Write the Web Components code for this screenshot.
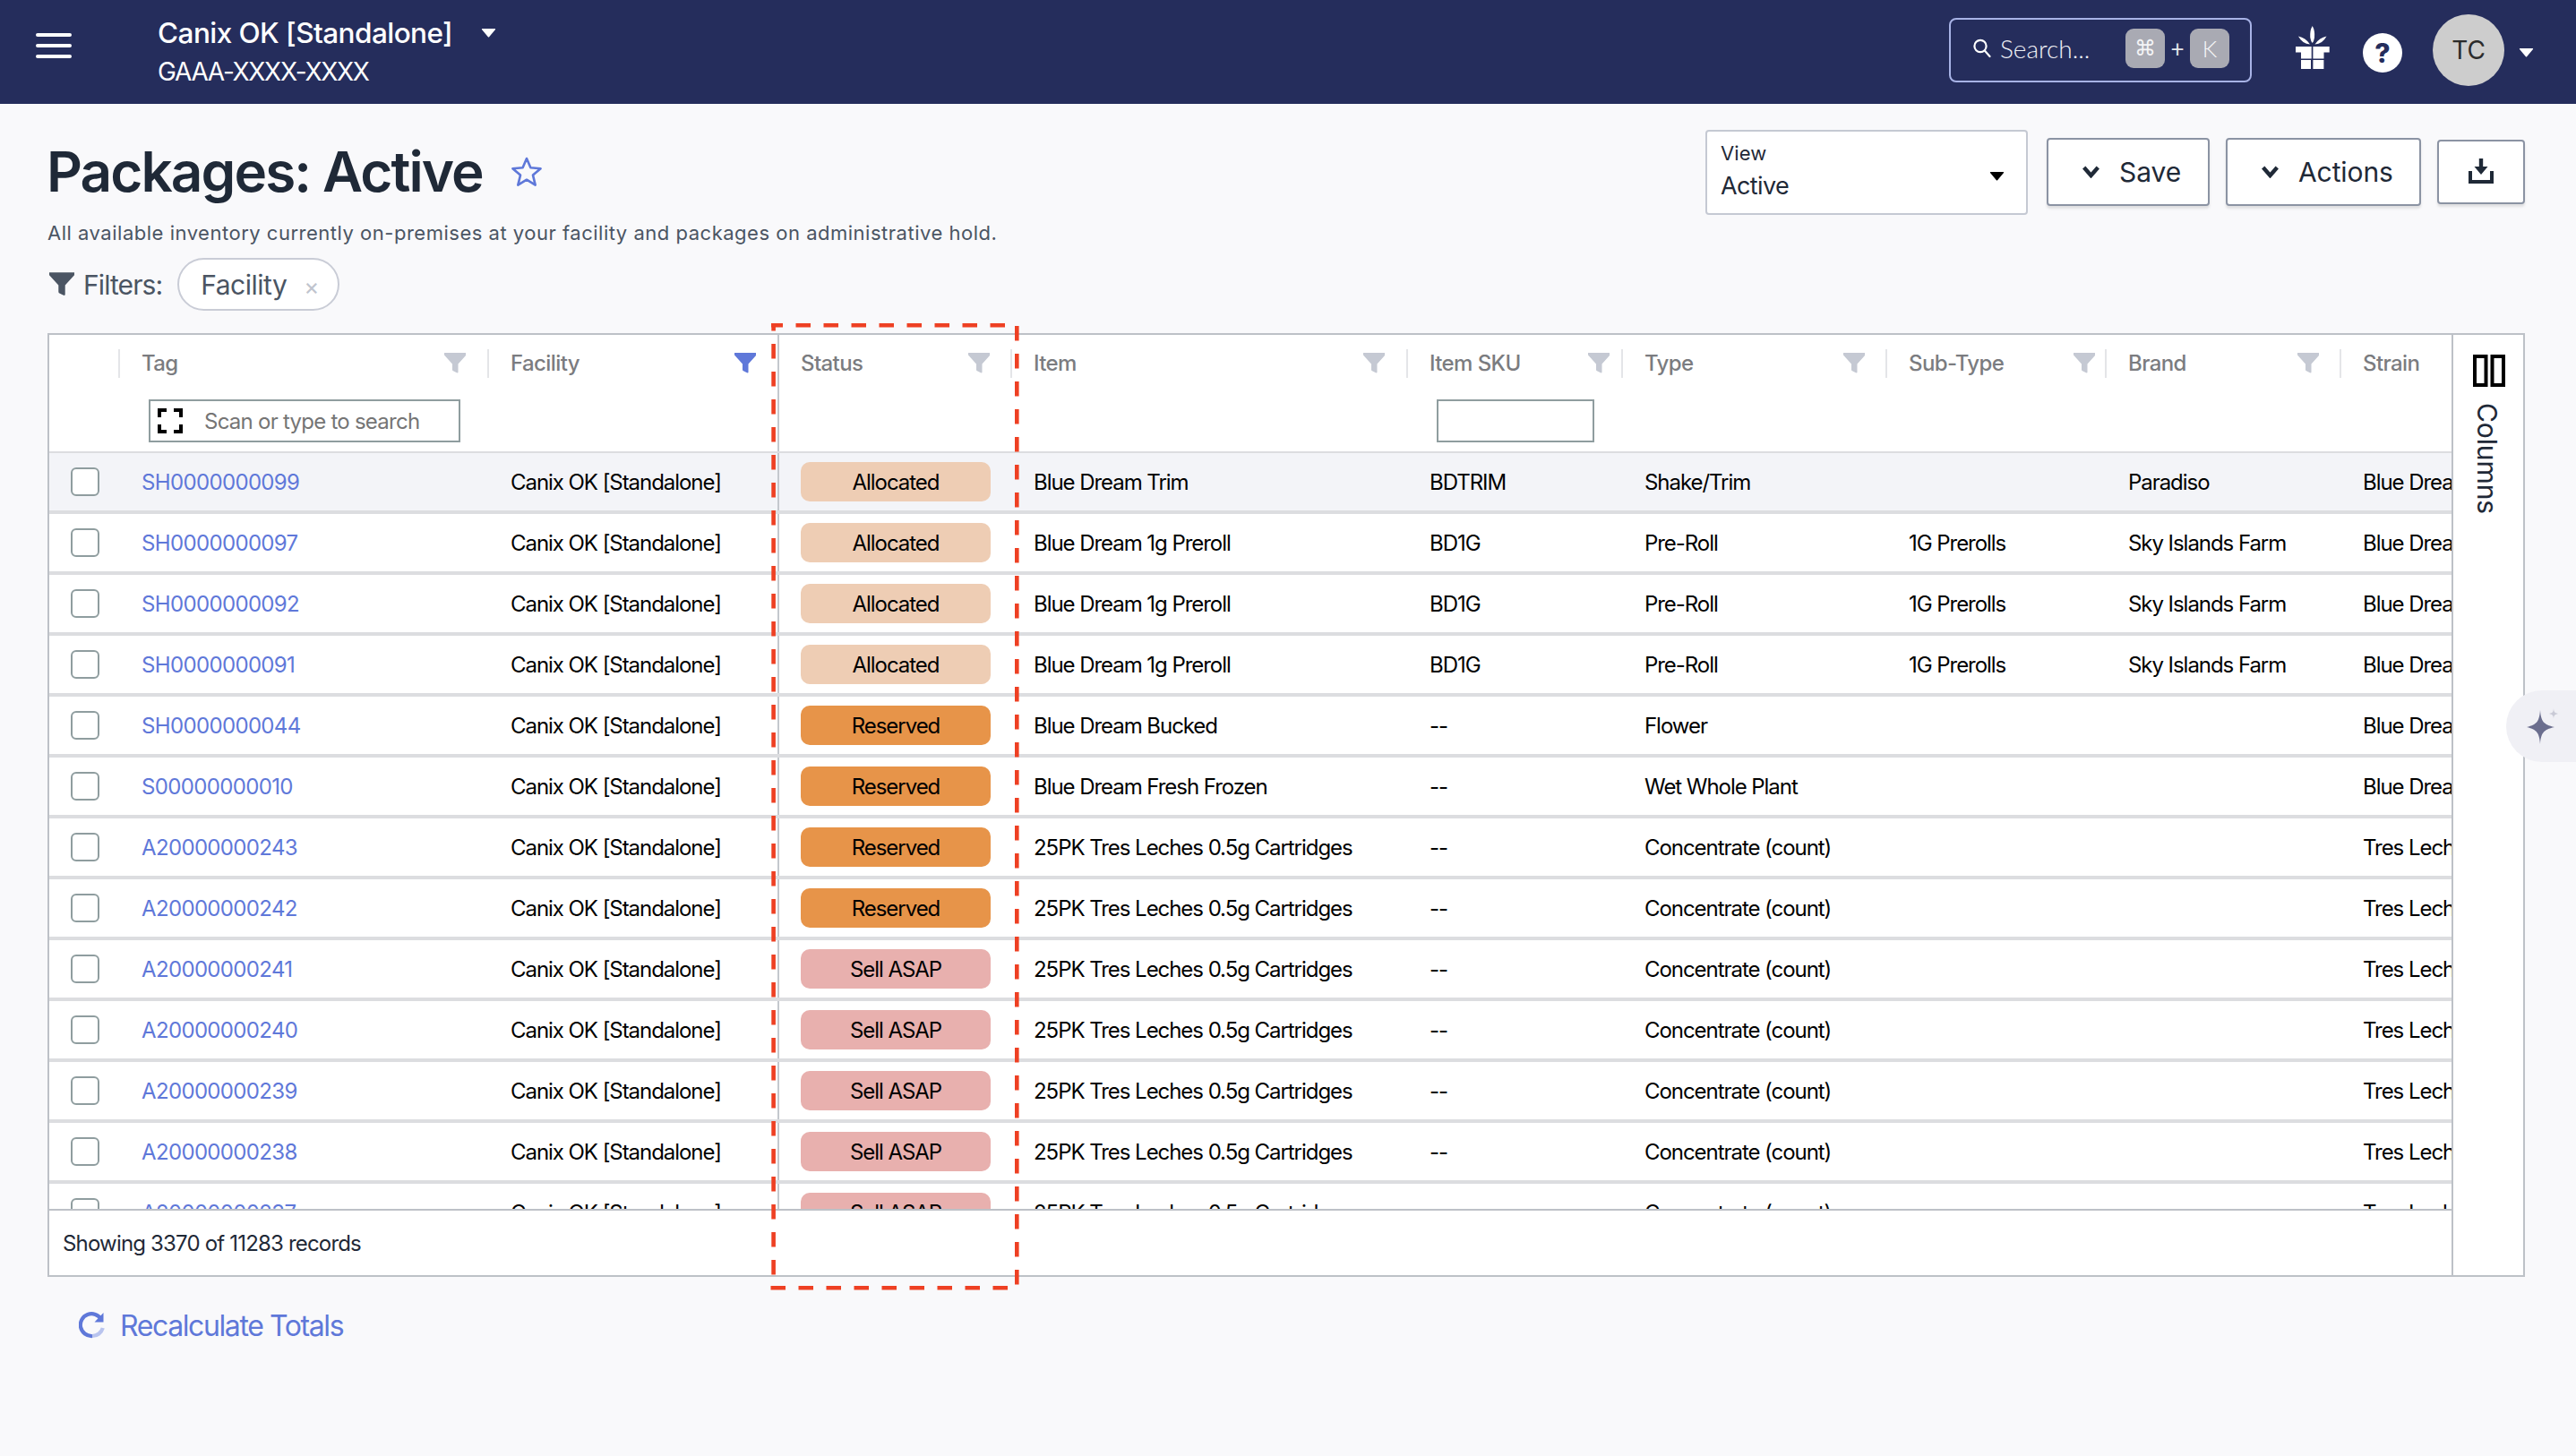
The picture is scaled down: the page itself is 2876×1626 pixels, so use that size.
<!DOCTYPE html>
<html lang="en">
<head>
<meta charset="utf-8">
<title>Packages: Active</title>
<style>
  html, body { margin: 0; padding: 0; background: #f9f9fb; }
  body { font-family: Inter, "Liberation Sans", sans-serif; width: 2876px; height: 1626px; overflow: hidden; position: relative; color: #1f2937; }
</style>
</head>
<body>
<app-header></app-header>
<page-main>
  <page-head title-text="Packages: Active" description="All available inventory currently on-premises at your facility and packages on administrative hold."></page-head>
  <filter-bar></filter-bar>
  <data-table></data-table>
  <recalc-link></recalc-link>
</page-main>
<focus-box></focus-box>
<assist-tab></assist-tab>

<script>
const BLUE = '#5f78d9';
const FUNNEL = 'M0 0H24.5V2.5L15.5 12.5V21.5Q15.5 23 13.5 22L9.5 20Q9 19.5 9 18.5V12.5L0 2.5Z';

function def(name, css, html, init) {
  customElements.define(name, class extends HTMLElement {
    connectedCallback() {
      if (this.shadowRoot) return;
      const root = this.attachShadow({ mode: 'open' });
      const a = n => this.getAttribute(n) || '';
      root.innerHTML = '<style>' + css + '</style>' + (typeof html === 'function' ? html(a, this) : html);
      if (init) init(root, a, this);
    }
  });
}

def('app-caret', `
  :host { display: inline-flex; }
  svg { display: block; }
`, a => `<svg width="${a('w') || 17}" height="${a('h') || 11}" viewBox="0 0 17 11"><path d="M1.5 1H15.5Q16.5 1 16 2L9.3 10Q8.5 11 7.7 10L1 2Q.5 1 1.5 1Z" fill="${a('color') || '#fff'}"/></svg>`);

def('app-header', `
  :host { display: flex; align-items: flex-start; height: 116px; background: #252d5c; color: #fff; box-sizing: border-box; padding: 0 47px 0 40px; }
  .burger { display: flex; flex-direction: column; gap: 8px; width: 40px; margin: 37px 96px 0 0; }
  .burger i { display: block; height: 4px; background: #fff; border-radius: 2px; }
  .who { padding-top: 14px; }
  .name { display: flex; align-items: center; height: 44px; font-size: 31.5px; font-weight: 500; letter-spacing: -.55px; white-space: nowrap; }
  .name app-caret { margin-left: 32px; }
  .acct { height: 36px; line-height: 36px; margin-top: 4px; font-size: 28px; letter-spacing: -1.3px; white-space: nowrap; }
  .right { margin-left: auto; display: flex; align-items: flex-start; }
  .search { margin-top: 20px; width: 338px; height: 72px; box-sizing: border-box; border: 2px solid #a8b3e6; border-radius: 8px; display: flex; align-items: center; padding: 0 23px 4px 25px; }
  .search svg { display: block; margin-right: 10px; }
  .search .ph { font-family: Lato, Inter, sans-serif; font-size: 28px; color: #f0f1f6; white-space: nowrap; font-weight: 300; }
  .keys { margin-left: auto; display: flex; align-items: center; }
  kbd { width: 44px; height: 44px; border-radius: 9px; background: #a9aab3; color: #f4f4f6; display: flex; align-items: center; justify-content: center; font: 24px "DejaVu Sans", Inter, sans-serif; }
  kbd.k { font: 300 26px Lato, Inter, sans-serif; }
  .plus { width: 28px; text-align: center; color: #e4e5ea; font: 400 26px Lato, Inter, sans-serif; }
  .gift { margin: 29px 37px 0 49px; display: block; }
  .help { margin-top: 37px; width: 44px; height: 44px; border-radius: 50%; background: #fff; color: #252d5c; font-size: 30px; font-weight: 800; display: flex; align-items: center; justify-content: center; }
  .avatar { margin: 16px 16px 0 34px; width: 80px; height: 80px; border-radius: 50%; background: #cdcdcd; color: #2b2b2b; font-size: 28px; display: flex; align-items: center; justify-content: center; }
  .tail { margin-top: 53px; }
`, `
  <div class="burger"><i></i><i></i><i></i></div>
  <div class="who">
    <div class="name">Canix OK [Standalone]<app-caret></app-caret></div>
    <div class="acct">GAAA-XXXX-XXXX</div>
  </div>
  <div class="right">
    <div class="search">
      <svg width="20" height="24" viewBox="0 0 20 24" fill="none" stroke="#fff" stroke-width="2.2" stroke-linecap="round"><circle cx="8" cy="9.5" r="6.6"/><path d="M12.8 14.6L18.5 21"/></svg>
      <span class="ph">Search...</span>
      <div class="keys"><kbd>⌘</kbd><span class="plus">+</span><kbd class="k">K</kbd></div>
    </div>
    <svg class="gift" width="38" height="48" viewBox="0 0 38 48" fill="#fff">
      <path d="M18.7 0Q21.7 5 21 13Q20.3 17.5 18.7 19Q17 17.5 16.3 13Q15.7 5 18.7 0Z"/>
      <path d="M3 11.5Q11 13 16 20.5Q7.5 20 3 11.5Z"/>
      <path d="M34.5 11.5Q26.5 13 21.5 20.5Q30 20 34.5 11.5Z"/>
      <path d="M0 23H17.7V36.5H6V29.5H0Z"/>
      <path d="M37.7 23H19.4V36.5H31.5V29.5H37.7Z"/>
      <rect x="6" y="38" width="11" height="10"/><rect x="19.4" y="38" width="12" height="10"/>
    </svg>
    <div class="help">?</div>
    <div class="avatar">TC</div>
    <app-caret class="tail"></app-caret>
  </div>
`);

def('page-main', `
  :host { display: block; padding: 28px 57px 0 53px; }
`, `<slot></slot>`);

def('page-head', `
  :host { display: block; }
  .top { display: flex; align-items: center; height: 96px; }
  h1 { margin: 0 0 0 -1px; font-size: 62px; font-weight: 600; letter-spacing: -1.9px; color: #1f2937; white-space: nowrap; line-height: 96px; }
  .star { margin-left: 31px; display: block; }
  .actions { margin-left: auto; display: flex; align-items: center; gap: 18px; }
  p { margin: 0; height: 40px; line-height: 40px; font-size: 22px; letter-spacing: .51px; color: #4b5563; white-space: nowrap; }
  app-select { margin-right: 3px; }
`, a => `
  <div class="top">
    <h1>${a('title-text')}</h1>
    <svg class="star" width="36" height="34" viewBox="0 0 36 34" fill="none" stroke="${BLUE}" stroke-width="2.6" stroke-linejoin="round"><path d="M18 2L22.4 12.3L33.6 13.2L25 20.6L27.7 31.6L18 25.7L8.3 31.6L11 20.6L2.4 13.2L13.6 12.3Z"/></svg>
    <div class="actions">
      <app-select label="View" value="Active"></app-select>
      <app-button label="Save" chevron style="--w:182px"></app-button>
      <app-button label="Actions" chevron style="--w:218px"></app-button>
      <app-button download style="--w:98px;--h:72px"></app-button>
    </div>
  </div>
  <p>${a('description')}</p>
`);

def('app-select', `
  :host { display: block; width: 360px; height: 95px; box-sizing: border-box; background: #fff; border: 2px solid #c5c9d3; border-radius: 4px; position: relative; padding: 8px 15px; color: #1f2937; }
  .l { font-size: 22px; line-height: 32px; letter-spacing: .1px; }
  .v { font-size: 27px; line-height: 40px; margin-top: 1px; letter-spacing: -.6px; }
  .c { position: absolute; right: 24px; top: 44px; }
`, a => `<div class="l">${a('label')}</div><div class="v">${a('value')}</div><app-caret class="c" color="#000"></app-caret>`);

def('app-button', `
  :host { display: block; width: var(--w); height: var(--h, 76px); box-sizing: border-box; background: #fff; border: 2px solid #8b93a3; border-radius: 4px; box-shadow: 0 3px 3px rgba(0,0,0,.1); color: #1f2937; }
  .in { display: flex; align-items: center; height: 100%; font-size: 30px; letter-spacing: -.1px; padding-left: 38px; white-space: nowrap; box-sizing: border-box; }
  .in svg.ch { margin-right: 22px; display: block; }
  .dl { justify-content: center; padding: 0 0 2px; }
`, (a, el) => el.hasAttribute('download')
  ? `<div class="in dl"><svg width="28" height="28" viewBox="0 0 28 28" fill="#1f2937"><path d="M11.8 0H16.2V9H21.5L14 18L6.500 9H11.800Z"/><path d="M0 14H4V24H24V14H28V28H0Z"/></svg></div>`
  : `<div class="in"><svg class="ch" width="19" height="14" viewBox="0 0 19 14" fill="none" stroke="#1f2937" stroke-width="4.400"><path d="M1.700 2L9.500 11L17.300 2"/></svg>${a('label')}</div>`);

def('filter-bar', `
  :host { display: flex; align-items: center; height: 59px; margin-top: 8px; color: #4b5563; }
  svg { display: block; margin: 0 10px 0 2px; }
  .lbl { font-size: 30px; letter-spacing: -.9px; margin-right: 17px; white-space: nowrap; }
`, `
  <svg width="28" height="28" viewBox="0 0 24.500 24"><path d="${FUNNEL}" fill="#4b5563"/></svg>
  <span class="lbl">Filters:</span>
  <filter-chip label="Facility"></filter-chip>
`);

def('filter-chip', `
  :host { display: flex; align-items: center; width: 181px; height: 59px; box-sizing: border-box; background: #fff; border: 2.500px solid #c9ccd6; border-radius: 30px; padding-left: 24px; color: #4b5563; font-size: 30px; letter-spacing: -.5px; white-space: nowrap; }
  .x { margin-left: 19px; color: #c0c4ce; font-size: 26px; line-height: 1; padding-top: 4px; }
`, a => `${a('label')}<span class="x">×</span>`);

def('col-head', `
  :host { display: block; position: relative; height: 130px; min-width: 0; box-sizing: border-box; }
  .t { display: flex; align-items: center; height: 63px; padding: 0 var(--fr, 26px) 0 24px; box-sizing: border-box; font-size: 24px; font-weight: 500; letter-spacing: -.6px; color: #7b7c80; white-space: nowrap; overflow: hidden; }
  .f { margin-left: auto; display: block; flex: none; }
  .sep { position: absolute; right: 0; top: 16px; width: 2px; height: 32px; background: #e4e5e8; }
  ::slotted(*) { margin: 9px 0 0 32px; }
`, (a, el) => `
  <div class="t">${a('label')}${a('label') && !el.hasAttribute('nofilter') ? `<svg class="f" width="24.500" height="23" viewBox="0 0 24.500 23"><path d="${FUNNEL}" fill="${el.hasAttribute('active') ? BLUE : '#c5c9d3'}"/></svg>` : ''}</div>
  ${el.hasAttribute('nosep') ? '' : '<div class="sep"></div>'}
  <slot></slot>
`);

def('head-input', `
  :host { display: flex; align-items: center; width: var(--w); height: 48px; box-sizing: border-box; border: 2px solid #8f9d9f; background: #fff; color: #757575; font-size: 24px; letter-spacing: -.75px; white-space: nowrap; }
  svg { display: block; margin: 0 24px 0 8px; }
`, a => a('placeholder') ? `<svg width="28" height="28" viewBox="0 0 28 28" fill="none" stroke="#000" stroke-width="4"><path d="M10 2H2V10M18 2H26V10M2 18V26H10M26 18V26H18"/></svg>${a('placeholder')}` : '');

def('status-badge', `
  :host { display: flex; align-items: center; justify-content: center; width: 212px; height: 44px; border-radius: 10px; font-size: 24px; letter-spacing: -1.05px; color: #000; white-space: nowrap; }
  :host([kind="Allocated"]) { background: #eecdb4; }
  :host([kind="Reserved"]) { background: #e79449; }
  :host([kind="Sell ASAP"]) { background: #e8b0ae; }
`, a => a('kind'));

def('table-row', `
  :host { display: grid; grid-template-columns: var(--cols); height: 68px; box-sizing: border-box; border-bottom: 4px solid #dcdde0; background: #fff; font-size: 24px; letter-spacing: -1.05px; color: #000; }
  :host([hl]) { background: #f3f4f8; }
  .c { display: flex; align-items: center; padding-left: 24px; white-space: nowrap; overflow: hidden; min-width: 0; }
  .status { box-shadow: -2px 0 0 #c4c8ce; overflow: visible; }
  .box i { display: block; width: 32px; height: 32px; box-sizing: border-box; border: 2px solid #8f9d9f; border-radius: 6px; background: #fff; }
  a { color: ${BLUE}; text-decoration: none; letter-spacing: -.65px; }
`, a => `
  <div class="c box"><i></i></div>
  <div class="c"><a href="#">${a('tag')}</a></div>
  <div class="c">${a('facility')}</div>
  <div class="c status"><status-badge kind="${a('status')}"></status-badge></div>
  <div class="c">${a('item')}</div>
  <div class="c">${a('sku')}</div>
  <div class="c">${a('type')}</div>
  <div class="c">${a('subtype')}</div>
  <div class="c">${a('brand')}</div>
  <div class="c">${a('strain')}</div>
`);

def('data-table', `
  :host { display: grid; grid-template-columns: 2682px 80px; width: 2766px; box-sizing: border-box; border: 2px solid #bdc1c7; background: #fff; margin-top: 25px; --cols: 79px 412px 324px 260px 442px 240px 295px 245px 262px 123px; }
  .main { min-width: 0; }
  .head { display: grid; grid-template-columns: var(--cols); height: 132px; box-sizing: border-box; border-bottom: 2px solid #dcdde0; }
  .head .st { box-shadow: -2px 0 0 #c4c8ce; }
  .rows { height: 844px; overflow: hidden; }
  .foot { height: 74px; box-sizing: border-box; border-top: 2px solid #bdc1c7; display: flex; align-items: center; padding: 0 0 0 15px; font-size: 24px; letter-spacing: -.82px; color: #1f2937; }
  .panel { border-left: 2px solid #bdc1c7; display: flex; flex-direction: column; align-items: center; padding-top: 22px; box-sizing: border-box; }
  .panel svg { display: block; margin-left: 2px; }
  .panel span { writing-mode: vertical-rl; font-size: 30px; margin-top: 18px; color: #1f2937; margin-left: -2px; letter-spacing: -.1px; }
`, `
  <div class="main">
    <div class="head">
      <col-head></col-head>
      <col-head label="Tag"><head-input placeholder="Scan or type to search" style="--w:348px"></head-input></col-head>
      <col-head label="Facility" active nosep></col-head>
      <col-head class="st" label="Status" style="--fr:25px"></col-head>
      <col-head label="Item"></col-head>
      <col-head label="Item SKU" style="--fr:15px"><head-input style="--w:176px"></head-input></col-head>
      <col-head label="Type" style="--fr:25px"></col-head>
      <col-head label="Sub-Type" style="--fr:13px"></col-head>
      <col-head label="Brand" style="--fr:25px"></col-head>
      <col-head label="Strain" nofilter nosep></col-head>
    </div>
    <div class="rows" id="rows"></div>
    <div class="foot">Showing 3370 of 11283 records</div>
  </div>
  <div class="panel">
    <svg width="36" height="36" viewBox="0 0 36 36" fill="none" stroke="#000" stroke-width="4"><rect x="2" y="2" width="12.500" height="32"/><rect x="21.500" y="2" width="12.500" height="32"/></svg>
    <span>Columns</span>
  </div>
`, root => {
  const F = 'Canix OK [Standalone]';
  const tres = ['25PK Tres Leches 0.5g Cartridges', '--', 'Concentrate (count)', '', '', 'Tres Leches'];
  const pre = ['Blue Dream 1g Preroll', 'BD1G', 'Pre-Roll', '1G Prerolls', 'Sky Islands Farm', 'Blue Dream'];
  const data = [
    ['SH0000000099', 'Allocated', ['Blue Dream Trim', 'BDTRIM', 'Shake/Trim', '', 'Paradiso', 'Blue Dream']],
    ['SH0000000097', 'Allocated', pre],
    ['SH0000000092', 'Allocated', pre],
    ['SH0000000091', 'Allocated', pre],
    ['SH0000000044', 'Reserved', ['Blue Dream Bucked', '--', 'Flower', '', '', 'Blue Dream']],
    ['S00000000010', 'Reserved', ['Blue Dream Fresh Frozen', '--', 'Wet Whole Plant', '', '', 'Blue Dream']],
    ['A20000000243', 'Reserved', tres],
    ['A20000000242', 'Reserved', tres],
    ['A20000000241', 'Sell ASAP', tres],
    ['A20000000240', 'Sell ASAP', tres],
    ['A20000000239', 'Sell ASAP', tres],
    ['A20000000238', 'Sell ASAP', tres],
    ['A20000000237', 'Sell ASAP', tres]
  ];
  const rows = root.getElementById('rows');
  data.forEach(([tag, status, d], i) => {
    const r = document.createElement('table-row');
    const vals = { tag, facility: F, status, item: d[0], sku: d[1], type: d[2], subtype: d[3], brand: d[4], strain: d[5] };
    for (const k in vals) r.setAttribute(k, vals[k]);
    if (i === 0) r.setAttribute('hl', '');
    rows.appendChild(r);
  });
});

def('recalc-link', `
  :host { display: flex; align-items: center; height: 32px; margin: 38px 0 0 35px; color: ${BLUE}; font-size: 32px; letter-spacing: -1.4px; white-space: nowrap; }
  svg { display: block; margin-right: 16px; }
`, `
  <svg width="30" height="30" viewBox="0 0 30 30" fill="none" stroke-width="4.200">
    <path d="M25 8.500A12.400 12.400 0 1 0 15 27" stroke="${BLUE}"/>
    <path d="M15 27A12.400 12.400 0 0 0 26.800 18" stroke="#b9c4ee"/>
    <path d="M27.500 1V11.500H17.500Z" fill="${BLUE}"/>
  </svg>
  Recalculate Totals
`);

def('focus-box', `
  :host { position: absolute; left: 850px; top: 350px; width: 300px; height: 1100px; pointer-events: none; }
  svg { display: block; }
  line { stroke: #ee4023; stroke-width: 4.600; stroke-dasharray: 16.500 14.500; }
`, `
  <svg width="300" height="1100" viewBox="850 350 300 1100">
    <line x1="861" y1="363.300" x2="1122" y2="363.300" stroke-dashoffset="3.500"/>
    <line x1="863.600" y1="361" x2="863.600" y2="1424" stroke-dashoffset="8"/>
    <line x1="1135.300" y1="364" x2="1135.300" y2="1436"/>
    <line x1="860.500" y1="1438.300" x2="1126" y2="1438.300"/>
  </svg>
`);

def('assist-tab', `
  :host { position: absolute; left: 2798px; top: 771px; width: 78px; height: 80px; background: #f0f0f5; border-radius: 40px 0 0 40px; display: flex; align-items: center; }
  svg { display: block; margin-left: 22px; }
`, `
  <svg width="36" height="40" viewBox="0 0 36 40">
    <path d="M16 2C17 14 19 18 32 21C19 24 17 28 16 40C15 28 13 24 1 21C13 18 15 14 16 2Z" fill="#6b6e8e"/>
    <path d="M31 0C31.300 4 32 5 36 6C32 7 31.300 8 31 12C30.700 8 30 7 26 6C30 5 30.700 4 31 0Z" fill="#c9cad6"/>
  </svg>
`);
</script>
</body>
</html>
